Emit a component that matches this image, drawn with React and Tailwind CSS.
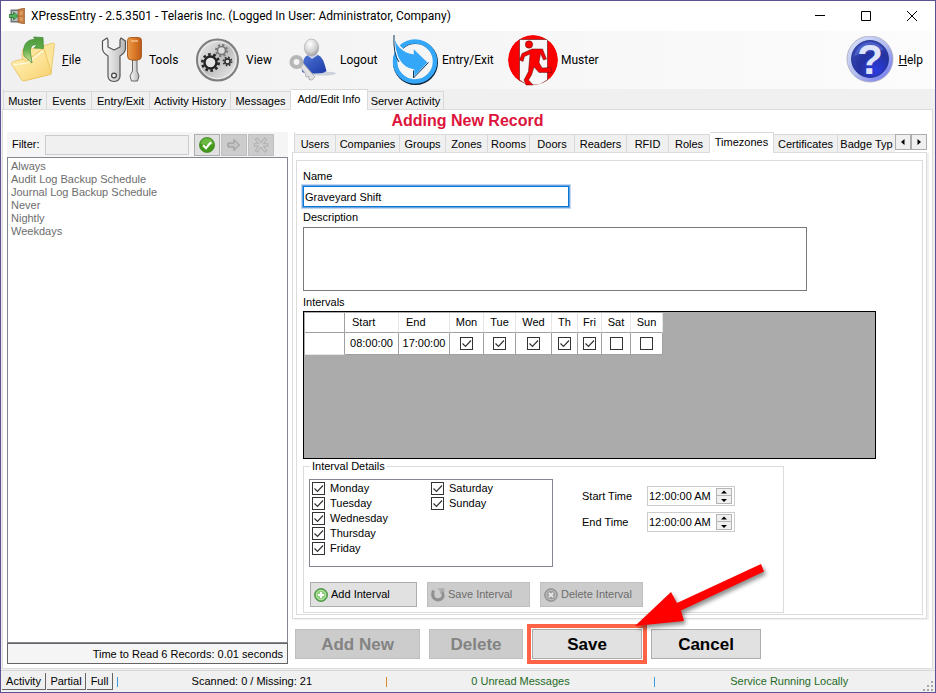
import { useState } from 'react';
import { clsx } from 'clsx';

const MAIN_TABS = [
  { label: 'Muster', width: 'w-[43px]' },
  { label: 'Events', width: 'w-[45px]' },
  { label: 'Entry/Exit', width: 'w-[58px]' },
  { label: 'Activity History', width: 'w-[81px]' },
  { label: 'Messages', width: 'w-[60px]' },
  { label: 'Add/Edit Info', width: 'w-[77px]' },
  { label: 'Server Activity', width: 'w-[76px]' },
];

const RECORD_TABS = [
  { label: 'Users', width: 'w-[41px]' },
  { label: 'Companies', width: 'w-[64px]' },
  { label: 'Groups', width: 'w-[46px]' },
  { label: 'Zones', width: 'w-[42px]' },
  { label: 'Rooms', width: 'w-[42px]' },
  { label: 'Doors', width: 'w-[45px]' },
  { label: 'Readers', width: 'w-[52px]' },
  { label: 'RFID', width: 'w-[42px]' },
  { label: 'Roles', width: 'w-[41px]' },
  { label: 'Timezones', width: 'w-[64px]' },
  { label: 'Certificates', width: 'w-[64px]' },
  { label: 'Badge Typ', width: 'w-[58px]' },
];

const RECORDS = [
  'Always',
  'Audit Log Backup Schedule',
  'Journal Log Backup Schedule',
  'Never',
  'Nightly',
  'Weekdays',
];

const GRID_DAYS = [
  { label: 'Mon', width: 'w-[34px]', on: true },
  { label: 'Tue', width: 'w-[32px]', on: true },
  { label: 'Wed', width: 'w-[36px]', on: true },
  { label: 'Th', width: 'w-[26px]', on: true },
  { label: 'Fri', width: 'w-[24px]', on: true },
  { label: 'Sat', width: 'w-[29px]', on: false },
  { label: 'Sun', width: 'w-[32px]', on: false },
];

const WEEK = ['Monday', 'Tuesday', 'Wednesday', 'Thursday', 'Friday', 'Saturday', 'Sunday'];

/* ---------- icons ---------- */

function AppIcon() {
  return (
    <svg viewBox="0 0 16 16" className="size-4" aria-hidden="true">
      <path d="M1.500 1.500h8v13h-8z" fill="#6f7478" />
      <path d="M3 3h6v10H3z" fill="#b9c0c2" />
      <path d="M9 1.500L15.500 0v16L9 14.500z" fill="#c07a3e" stroke="#8a5224" strokeWidth=".6" />
      <path d="M10.500 3.500l3.500-1v4.600l-3.500.5zM10.500 9l3.500.3v4.400l-3.500-1z" fill="#d9985c" />
      <path d="M0 6.500h4.500V4L9 8l-4.500 4V9.500H0z" fill="#54b35a" stroke="#1f6b2b" strokeWidth=".7" />
    </svg>
  );
}

function FileIcon() {
  return (
    <svg viewBox="0 0 48 48" className="size-12" aria-hidden="true">
      <defs>
        <linearGradient id="folder" x1="0" y1="0" x2="1" y2="1">
          <stop offset="0" stopColor="#fff2bd" />
          <stop offset=".55" stopColor="#fce293" />
          <stop offset="1" stopColor="#f7cf6e" />
        </linearGradient>
        <linearGradient id="leaf" x1="0" y1="0" x2="0" y2="1">
          <stop offset="0" stopColor="#4f9a3c" />
          <stop offset=".5" stopColor="#5fae4b" />
          <stop offset="1" stopColor="#a5d788" stopOpacity=".5" />
        </linearGradient>
      </defs>
      <path d="M12 19l1-6 7-2 3 2 20-6q1.500 0 1.500 1.500L41 38 16 44z" fill="#fbe59a" stroke="#e8c25c" strokeWidth=".8" />
      <path d="M1.500 28q0-2 2-2.500l9-2.500 4 2.500 15-12q2-1 3 .5L41 36q.5 2-1 2.500L14 45q-2 .3-3-2z" fill="url(#folder)" stroke="#e9bf58" strokeWidth=".8" />
      <path d="M3 29L17 27 33 15" stroke="#fffbe6" strokeWidth="1.200" fill="none" />
      <path d="M14 20C12 9 17 3 25 3.500L23.500 1 33 1.500l.5 11L24 12l3-3c-6-1-7 3-6.500 8l1.500 10z" fill="url(#leaf)" stroke="#3f8a35" strokeWidth=".7" />
    </svg>
  );
}

function ToolsIcon() {
  return (
    <svg viewBox="0 0 48 48" className="size-12" aria-hidden="true">
      <defs>
        <linearGradient id="steel" x1="0" x2="1">
          <stop offset="0" stopColor="#fdfdfd" />
          <stop offset="1" stopColor="#b5b5b5" />
        </linearGradient>
        <linearGradient id="handle" x1="0" x2="1">
          <stop offset="0" stopColor="#e99a4c" />
          <stop offset=".5" stopColor="#dc7a28" />
          <stop offset="1" stopColor="#b9591a" />
        </linearGradient>
      </defs>
      <path
        d="M10 2L5.500 5v8q.5 4 5.500 7V40q0 5 6 5.500 6-.5 6-5.500V20q5-3 5.500-7V5L24 2l-1 2v7l-6 3-6-3V4z"
        fill="url(#steel)"
        stroke="#555"
        strokeWidth="1.200"
        strokeLinejoin="round"
      />
      <circle cx="17" cy="39.500" r="2.400" fill="#eee" stroke="#444" strokeWidth="1.200" />
      <path d="M35.500 24h4.500v11l2 5-1.500 5h-6L33 40l2.500-5z" fill="url(#steel)" stroke="#666" strokeWidth="1" />
      <path d="M33.500 1.500h8q3 0 3 3V20q0 4-4 4h-6q-4 0-4-4V4.500q0-3 3-3z" fill="url(#handle)" stroke="#a5581d" strokeWidth=".9" />
      <path d="M34 5h7" stroke="#f6c08a" strokeWidth="1.500" />
    </svg>
  );
}

function ViewIcon() {
  return (
    <svg viewBox="0 0 48 48" className="size-12" aria-hidden="true">
      <defs>
        <linearGradient id="chrome" x1="0" y1="0" x2="1" y2="1">
          <stop offset="0" stopColor="#f4f4f4" />
          <stop offset=".5" stopColor="#bcbcbc" />
          <stop offset="1" stopColor="#f2f2f2" />
        </linearGradient>
      </defs>
      <circle cx="23.500" cy="24" r="20.500" fill="url(#chrome)" stroke="#7d7d7d" strokeWidth="2" />
      <circle cx="23.500" cy="24" r="18.500" fill="none" stroke="#eee" strokeWidth="1" />
      <g fill="none" stroke="#222">
        <circle cx="16.500" cy="26.500" r="6" strokeWidth="2.400" fill="#e4e4e4" />
        <circle cx="16.500" cy="26.500" r="8.200" strokeWidth="2.600" strokeDasharray="2.575 2.575" />
      </g>
      <g fill="none" stroke="#777">
        <circle cx="27.500" cy="14.500" r="4" strokeWidth="1.600" fill="#ddd" />
        <circle cx="27.500" cy="14.500" r="5.600" strokeWidth="1.800" strokeDasharray="2.200 2.200" />
      </g>
      <g fill="none" stroke="#333">
        <circle cx="33.500" cy="25.500" r="2.600" strokeWidth="1.600" fill="#ddd" />
        <circle cx="33.500" cy="25.500" r="4.100" strokeWidth="1.700" strokeDasharray="1.610 1.610" />
      </g>
    </svg>
  );
}

function LogoutIcon() {
  return (
    <svg viewBox="0 0 48 48" className="size-12" aria-hidden="true">
      <defs>
        <radialGradient id="head" cx=".4" cy=".3" r=".8">
          <stop offset="0" stopColor="#ffffff" />
          <stop offset=".6" stopColor="#cfcfcf" />
          <stop offset="1" stopColor="#8d8d8d" />
        </radialGradient>
        <linearGradient id="shirt" x1="0" y1="0" x2="1" y2="1">
          <stop offset="0" stopColor="#4f74d4" />
          <stop offset="1" stopColor="#1a3aa8" />
        </linearGradient>
      </defs>
      <ellipse cx="34" cy="37.500" rx="14" ry="2" fill="#ccd1dc" />
      <path d="M14 36q0-15 6-17h10q5 1 8.500 16-2 2.500-12 2.500-9 0-12.500-1.500z" fill="url(#shirt)" />
      <path d="M19 19l5 4 6-4-2-2.500h-7z" fill="#c9d2ec" />
      <ellipse cx="23.500" cy="11.500" rx="7.200" ry="8.500" fill="url(#head)" stroke="#a5a5a5" strokeWidth=".6" />
      <path d="M11 30l4-3 12 14-3 3-3-.5v-3l-3 .5-.5-3.500z" fill="#e2e2e2" stroke="#a5a5a5" strokeWidth=".8" />
      <circle cx="8.500" cy="26" r="5" fill="#f4f4f4" stroke="#b6b6b6" strokeWidth="4" />
    </svg>
  );
}

function EntryExitIcon() {
  return (
    <svg viewBox="0 0 48 48" className="size-12 overflow-visible" aria-hidden="true">
      <circle cx="25.500" cy="26.500" r="20.500" fill="none" stroke="#0b2138" strokeWidth="4" />
      <circle cx="25" cy="25.500" r="20" fill="none" stroke="#35a7f8" strokeWidth="4.500" />
      <path
        d="M4-1Q8 15 23 17.500V11.500L38.500 26.500 23.500 42V34Q4 31 4-1z"
        fill="#35a7f8"
        stroke="#f5f5f5"
        strokeWidth="1.500"
      />
      <path d="M4-1Q3 18 9 26M23.500 34.500V42L38.500 26.500" fill="none" stroke="#12395e" strokeWidth="1" />
    </svg>
  );
}

function MusterIcon() {
  return (
    <svg viewBox="0 0 48 48" className="size-12 overflow-visible" aria-hidden="true">
      <defs>
        <clipPath id="disc">
          <circle cx="24" cy="24" r="25" />
        </clipPath>
      </defs>
      <g clipPath="url(#disc)">
        <circle cx="24" cy="24" r="25" fill="#fa0000" />
        <path d="M10.500 3.500h28V44L30 49H18l-7.500-5z" fill="#f7f7f7" stroke="#5a1010" strokeWidth=".6" />
      </g>
      <circle cx="20" cy="8.500" r="3.700" fill="#fa0000" stroke="#5a1010" strokeWidth=".5" />
      <path
        d="M23 13H33.500L37.500 23 34.500 24 31.500 17.500 30 26.500 33 32 42 31.500 43 36.500H30L25 31 22.500 39 19.500 44 24 49H17L15 44 19.500 35.500 21 18 15.500 20.500 14 25.500 10.500 24 13 17.500z"
        fill="#fa0000"
        stroke="#5a1010"
        strokeWidth=".5"
      />
    </svg>
  );
}

function HelpIcon() {
  return (
    <svg viewBox="0 0 48 48" className="size-12" aria-hidden="true">
      <defs>
        <linearGradient id="helpRim" x1="0" y1="0" x2="1" y2="1">
          <stop offset="0" stopColor="#dfe6fb" />
          <stop offset=".5" stopColor="#b3bdf0" />
          <stop offset="1" stopColor="#6670f0" />
        </linearGradient>
        <radialGradient id="helpFace" cx=".65" cy=".8" r=".9">
          <stop offset="0" stopColor="#2b3ce0" />
          <stop offset=".5" stopColor="#2532a0" />
          <stop offset="1" stopColor="#3c4fb8" />
        </radialGradient>
      </defs>
      <circle cx="24" cy="23" r="23" fill="url(#helpRim)" stroke="#a9a9b8" strokeWidth=".8" />
      <circle cx="24" cy="23" r="18.500" fill="url(#helpFace)" stroke="#1d2a86" strokeWidth=".8" />
      <path d="M8 20Q12 7 24 6 34 7 38 14 22 14 8 20z" fill="#6f80e6" opacity=".45" />
      <text x="24" y="38" textAnchor="middle" fontSize="42" fontWeight="700" fontFamily="Liberation Sans, Arial, sans-serif" fill="#dfe4fb">
        ?
      </text>
    </svg>
  );
}

function CheckBadge() {
  return (
    <svg viewBox="0 0 16 16" className="size-4" aria-hidden="true">
      <circle cx="8" cy="8" r="7.600" fill="#43991b" stroke="#2f7a10" strokeWidth=".6" />
      <path d="M1.500 7Q3 1.200 8 1.200T14.500 7Q8 9 1.500 7z" fill="#7cc653" opacity=".7" />
      <path d="M4 8.200l3 3 5-6" fill="none" stroke="#fff" strokeWidth="2.200" />
    </svg>
  );
}

function ArrowGlyph() {
  return (
    <svg viewBox="0 0 14 14" className="size-3.5" aria-hidden="true">
      <path d="M1 5h6V1.500L12.500 7 7 12.500V9H1z" fill="#c4c4c4" stroke="#949494" strokeWidth="1" />
    </svg>
  );
}

function StarGlyph() {
  return (
    <svg viewBox="0 0 16 16" className="size-4" aria-hidden="true">
      <g strokeLinecap="square">
        <path d="M8 8L4 2.500M8 8l4-5.500M8 8h5.500M8 8H2.500M8 8l4 5.500M8 8l-4 5.500" stroke="#adadad" strokeWidth="3.400" />
        <path d="M8 8L4 2.500M8 8l4-5.500M8 8h5.500M8 8H2.500M8 8l4 5.500M8 8l-4 5.500" stroke="#cfcfcf" strokeWidth="1.600" />
      </g>
    </svg>
  );
}

function AddGlyph() {
  return (
    <svg viewBox="0 0 14 14" className="size-3.5" aria-hidden="true">
      <circle cx="7" cy="7" r="6.500" fill="#5cb04c" stroke="#3f8838" strokeWidth=".8" />
      <circle cx="7" cy="7" r="4.800" fill="#8fce7c" stroke="#d5efcc" strokeWidth=".8" />
      <path d="M7 4v6M4 7h6" stroke="#fff" strokeWidth="2" />
    </svg>
  );
}

function UndoGlyph() {
  return (
    <svg viewBox="0 0 14 14" className="size-3.5" aria-hidden="true">
      <path d="M2.500 2.500Q0 9 5 11.500 10 13 12 8.500 12.500 5 10 3" fill="none" stroke="#909090" strokeWidth="3" />
      <path d="M6.500.3h7V4L11 3.500V6z" fill="#adadad" />
    </svg>
  );
}

function DeleteGlyph() {
  return (
    <svg viewBox="0 0 14 14" className="size-3.5" aria-hidden="true">
      <circle cx="7" cy="7" r="6.300" fill="#9d9d9d" stroke="#838383" strokeWidth=".8" />
      <circle cx="7" cy="7" r="4.800" fill="none" stroke="#c9c9c9" strokeWidth=".8" />
      <path d="M4.800 4.800l4.400 4.400M9.200 4.800L4.800 9.200" stroke="#e6e6e6" strokeWidth="1.800" />
    </svg>
  );
}

function Triangle({ d }) {
  return (
    <svg viewBox="0 0 8 8" className="size-2 shrink-0" aria-hidden="true">
      <path d={d} fill="#000" />
    </svg>
  );
}

/* ---------- small controls ---------- */

function Tick({ id, label, checked, onChange }) {
  return (
    <span className="inline-grid size-[13px] shrink-0">
      <input
        id={id}
        type="checkbox"
        aria-label={label}
        checked={checked}
        onChange={onChange}
        className="peer col-start-1 row-start-1 size-[13px] appearance-none border border-[#333] bg-white"
      />
      <svg
        viewBox="0 0 13 13"
        className="pointer-events-none invisible col-start-1 row-start-1 size-[13px] peer-checked:visible"
        aria-hidden="true"
      >
        <path d="M2.500 6.500l3 3 5.500-6" fill="none" stroke="#333" strokeWidth="1.200" />
      </svg>
    </span>
  );
}

function ToolButton({ icon, width, children }) {
  return (
    <button type="button" className={clsx('flex items-center gap-1', width)}>
      {icon}
      <span>{children}</span>
    </button>
  );
}

function Tab({ label, width, selected, onClick }) {
  return (
    <button
      type="button"
      role="tab"
      aria-selected={selected}
      onClick={onClick}
      className={clsx(
        'shrink-0 border-t border-r border-[#d9d9d9] text-center whitespace-nowrap',
        width,
        selected ? 'h-[21px] bg-white pb-0.5' : 'mt-0.5 h-[18px] bg-[#f0f0f0] pt-0.5',
      )}
    >
      {label}
    </button>
  );
}

function IntervalButton({ icon, label, disabled, width }) {
  return (
    <button
      type="button"
      disabled={disabled}
      className={clsx(
        'flex h-[25px] items-center gap-[3px] border px-[3px]',
        width,
        disabled ? 'border-[#bfbfbf] bg-[#ccc] text-[#6d6d6d]' : 'border-[#adadad] bg-[#e1e1e1]',
      )}
    >
      {icon}
      {label}
    </button>
  );
}

function BigButton({ label, disabled, width }) {
  return (
    <button
      type="button"
      disabled={disabled}
      className={clsx(
        'h-[30px] border text-[17px] font-bold',
        width,
        disabled ? 'border-[#bfbfbf] bg-[#ccc] text-[#838383]' : 'border-[#adadad] bg-[#e1e1e1] text-black',
      )}
    >
      {label}
    </button>
  );
}

function TimeField({ id, label }) {
  const [value, setValue] = useState('12:00:00 AM');
  return (
    <div className="flex items-center">
      <label htmlFor={id} className="w-[65px]">{label}</label>
      <div className="flex h-5 w-[88px] items-center border border-[#ccc] bg-white pr-0.5">
        <input
          id={id}
          value={value}
          onChange={(e) => setValue(e.target.value)}
          className="h-4 min-w-0 flex-1 pl-px outline-none"
        />
        <div className="flex w-4 flex-col border border-[#b5b5b5] bg-[#f0f0f0]">
          <button type="button" aria-label={`${label} up`} className="flex h-[7px] items-center justify-center border-b border-[#b5b5b5]">
            <Triangle d="M1 5.500l3-3 3 3z" />
          </button>
          <button type="button" aria-label={`${label} down`} className="flex h-[7px] items-center justify-center">
            <Triangle d="M1 3l3 3 3-3z" />
          </button>
        </div>
      </div>
    </div>
  );
}

/* ---------- regions ---------- */

function TitleBar() {
  return (
    <header className="flex h-[30px] items-center bg-white pl-2 font-[Roboto,'Noto_Sans',sans-serif] text-[12px]">
      <AppIcon />
      <h1 className="flex-1 pl-1.5">XPressEntry - 2.5.3501 - Telaeris Inc. (Logged In User: Administrator, Company)</h1>
      <button type="button" aria-label="Minimize" className="flex h-full w-[46px] items-center justify-center">
        <svg viewBox="0 0 10 10" className="size-2.5"><path d="M0 4.500h10" stroke="#000" /></svg>
      </button>
      <button type="button" aria-label="Maximize" className="flex h-full w-[46px] items-center justify-center">
        <svg viewBox="0 0 10 10" className="size-2.5"><path d="M.5.5h9v9h-9z" fill="none" stroke="#000" /></svg>
      </button>
      <button type="button" aria-label="Close" className="flex h-full w-[46px] items-center justify-center">
        <svg viewBox="0 0 10 10" className="size-2.5"><path d="M0 0l10 10M10 0L0 10" stroke="#000" /></svg>
      </button>
    </header>
  );
}

function Toolbar() {
  return (
    <nav className="flex h-[58px] items-center bg-linear-to-r from-[#f0f0f0] to-[#fcfcfc] pr-3 pl-[9px] font-[Roboto,'Noto_Sans',sans-serif] text-[12px]">
      <ToolButton icon={<FileIcon />} width="w-[87px]"><u>F</u>ile</ToolButton>
      <ToolButton icon={<ToolsIcon />} width="w-[97px]">Tools</ToolButton>
      <ToolButton icon={<ViewIcon />} width="w-[94px]">View</ToolButton>
      <ToolButton icon={<LogoutIcon />} width="w-[102px]">Logout</ToolButton>
      <ToolButton icon={<EntryExitIcon />} width="w-[119px]">Entry/Exit</ToolButton>
      <ToolButton icon={<MusterIcon />}>Muster</ToolButton>
      <div className="flex-1" />
      <ToolButton icon={<HelpIcon />}><u>H</u>elp</ToolButton>
    </nav>
  );
}

function RecordList() {
  const small = 'flex h-[22px] w-[26px] items-center justify-center border';
  return (
    <aside className="flex w-[281px] shrink-0 flex-col pt-[22px] pb-1">
      <div className="flex h-[25px] items-center bg-[#f5f5f5] pr-3.5 pl-[5px]">
        <label htmlFor="filter" className="w-[33px]">Filter:</label>
        <input id="filter" className="h-5 min-w-0 flex-1 border border-[#ccc] bg-[#f0f0f0] px-1" />
        <div className="ml-[5px] flex gap-px">
          <button type="button" aria-label="Apply filter" className={clsx(small, 'border-[#adadad] bg-[#e1e1e1]')}>
            <CheckBadge />
          </button>
          <button type="button" aria-label="Next" disabled className={clsx(small, 'border-[#bfbfbf] bg-[#ccc]')}>
            <ArrowGlyph />
          </button>
          <button type="button" aria-label="Clear filter" disabled className={clsx(small, 'border-[#bfbfbf] bg-[#ccc]')}>
            <StarGlyph />
          </button>
        </div>
      </div>
      <ul className="flex-1 border border-[#828790] bg-white px-[3px] py-0.5 leading-[13px] text-[#6d6d6d]">
        {RECORDS.map((name) => (
          <li key={name}>{name}</li>
        ))}
      </ul>
      <div className="h-[21px] border border-[#646464] bg-[#f5f5f5] pr-1 text-right leading-5">
        Time to Read 6 Records: 0.01 seconds
      </div>
    </aside>
  );
}

function IntervalGrid() {
  const [days, setDays] = useState(GRID_DAYS.map((d) => d.on));
  const toggle = (i) => setDays(days.map((on, n) => (n === i ? !on : on)));
  const head = 'border-r border-b border-r-[#e5e5e5] border-b-[#a0a0a0] p-0 font-normal';
  const cell = 'border-r border-b border-[#a0a0a0] p-0';

  return (
    <div className="h-[148px] w-full max-w-[573px] border border-black bg-[#ababab] pt-px pl-px">
      <table className="w-[358px] table-fixed border-separate border-spacing-0 bg-white">
        <thead>
          <tr className="h-5">
            <th className="w-10 border-r border-b border-r-[#a0a0a0] border-b-[#a0a0a0]" aria-label="Row" />
            <th className={clsx(head, 'w-[54px] pl-[7px] text-left')}>Start</th>
            <th className={clsx(head, 'w-[51px] pl-[7px] text-left')}>End</th>
            {GRID_DAYS.map((d) => (
              <th key={d.label} className={clsx(head, d.width)}>{d.label}</th>
            ))}
          </tr>
        </thead>
        <tbody>
          <tr className="h-[22px]">
            <td className="border-r border-b border-r-[#a0a0a0] border-b-[#e5e5e5]" />
            <td className={clsx(cell, 'text-center')}>08:00:00</td>
            <td className={clsx(cell, 'text-center')}>17:00:00</td>
            {GRID_DAYS.map((d, i) => (
              <td key={d.label} className={clsx(cell, 'leading-none')}>
                <div className="flex items-center justify-center">
                  <Tick label={d.label} checked={days[i]} onChange={() => toggle(i)} />
                </div>
              </td>
            ))}
          </tr>
        </tbody>
      </table>
    </div>
  );
}

function IntervalDetails() {
  const [picked, setPicked] = useState(WEEK);
  const toggle = (day) =>
    setPicked(picked.includes(day) ? picked.filter((d) => d !== day) : [...picked, day]);

  return (
    <fieldset className="w-full max-w-[481px] border border-[#dcdcdc] px-[5px] pb-[5px]">
      <legend className="ml-px px-0.5 leading-[15px]">Interval Details</legend>
      <div className="mt-[5px] flex gap-[29px]">
        <div className="grid h-[88px] w-[244px] grid-flow-col grid-cols-2 grid-rows-[repeat(5,15px)] border border-[#828790] bg-white px-0.5 py-px">
          {WEEK.map((day) => (
            <div key={day} className="flex items-center gap-[5px]">
              <Tick id={`day-${day}`} checked={picked.includes(day)} onChange={() => toggle(day)} />
              <label htmlFor={`day-${day}`}>{day}</label>
            </div>
          ))}
        </div>
        <div className="flex flex-col gap-1.5 pt-[7px]">
          <TimeField id="start-time" label="Start Time" />
          <TimeField id="end-time" label="End Time" />
        </div>
      </div>
      <div className="mt-[15px] flex gap-2.5 pl-px">
        <IntervalButton icon={<AddGlyph />} label="Add Interval" width="w-[107px]" />
        <IntervalButton icon={<UndoGlyph />} label="Save Interval" width="w-[103px]" disabled />
        <IntervalButton icon={<DeleteGlyph />} label="Delete Interval" width="w-[103px]" disabled />
      </div>
    </fieldset>
  );
}

function PointerArrow() {
  return (
    <svg
      viewBox="0 0 136 68"
      className="pointer-events-none absolute right-[-127px] bottom-[30px] z-10 h-[68px] w-[136px] overflow-visible drop-shadow-[2px_3px_2px_rgba(0,0,0,0.45)]"
      aria-hidden="true"
    >
      <path d="M1 64L37 30l6 11L127 2l3 7.500L47 48.500 50 59z" fill="#fe0000" />
    </svg>
  );
}

function TimezoneForm() {
  const [name, setName] = useState('Graveyard Shift');
  return (
    <div className="flex flex-1 flex-col border border-[#dcdcdc] bg-white px-[3px] pt-[7px] pb-[3px] shadow-[2px_1px_0_#f0f0f0]">
      <div className="flex flex-1 flex-col items-start border border-[#dcdcdc] pt-2 pr-2 pl-[6px]">
        <label htmlFor="name" className="leading-[15px]">Name</label>
        <input
          id="name"
          value={name}
          onChange={(e) => setName(e.target.value)}
          className="mt-0.5 h-[21px] w-[266px] border border-[#0078d7] bg-white px-px shadow-[0_0_0_1px_#6da4e0,0_0_0_2px_#c3d7f2] outline-none"
        />
        <label htmlFor="description" className="mt-[3px] leading-[15px]">Description</label>
        <textarea id="description" className="mt-0.5 h-16 w-full max-w-[504px] resize-none border border-[#7a7a7a] bg-white" />
        <h3 className="mt-1 mb-px leading-[15px]">Intervals</h3>
        <IntervalGrid />
        <IntervalDetails />
      </div>
    </div>
  );
}

function RecordEditor() {
  const [tab, setTab] = useState('Timezones');
  return (
    <main className="flex min-w-0 flex-1 flex-col pr-[5px] pb-1">
      <div className="z-10 mt-[22px] -mb-px flex h-[21px] items-start pl-0.5">
        <div role="tablist" className="flex min-w-0 flex-1 items-start overflow-hidden border-l border-[#d9d9d9]">
          {RECORD_TABS.map((t) => (
            <Tab key={t.label} {...t} selected={t.label === tab} onClick={() => setTab(t.label)} />
          ))}
        </div>
        <div className="flex self-start pt-0.5">
          <button type="button" aria-label="Scroll tabs left" className="flex size-4 items-center justify-center border border-[#adadad] bg-[#f0f0f0]">
            <Triangle d="M5.500 1L2 4l3.500 3z" />
          </button>
          <button type="button" aria-label="Scroll tabs right" className="flex size-4 items-center justify-center border border-[#adadad] bg-[#f0f0f0]">
            <Triangle d="M2.500 1L6 4 2.500 7z" />
          </button>
        </div>
      </div>
      <TimezoneForm />
      <div className="flex items-center gap-[9px] pt-[5px] pl-[3px]">
        <BigButton label="Add New" width="w-[125px]" disabled />
        <div className="flex items-center gap-1">
          <BigButton label="Delete" width="w-[94px]" disabled />
          <div className="relative flex border-4 border-[#ff6347] p-px">
            <BigButton label="Save" width="w-[110px]" />
            <PointerArrow />
          </div>
          <BigButton label="Cancel" width="w-[110px]" />
        </div>
      </div>
    </main>
  );
}

function StatusBar() {
  const mode = 'h-[17px] border-r border-b border-[#646464] text-center leading-4';
  return (
    <footer className="mt-px flex h-[22px] items-center border-t border-[#d7d7d7] bg-[#f0f0f0] pl-px">
      <div className="flex gap-px">
        <button type="button" className={clsx(mode, 'w-11')}>Activity</button>
        <button type="button" className={clsx(mode, 'w-[39px]')}>Partial</button>
        <button type="button" className={clsx(mode, 'w-[26px]')}>Full</button>
      </div>
      <div className="ml-1 flex flex-1 items-center">
        <span className="h-2.5 w-px bg-[#3d9be0]" />
        <p className="flex-1 text-center">Scanned: 0 / Missing: 21</p>
        <span className="h-2.5 w-px bg-[#d98a2b]" />
        <p className="flex-1 text-center text-[#1e6b1e]">0 Unread Messages</p>
        <span className="h-2.5 w-px bg-[#3d9be0]" />
        <p className="flex-1 text-center text-[#1e6b1e]">Service Running Locally</p>
      </div>
      <svg viewBox="0 0 11 11" className="mr-px size-[11px] self-end" aria-hidden="true">
        <path d="M8 0h2v2H8zM4 4h2v2H4zM8 4h2v2H8zM0 8h2v2H0zM4 8h2v2H4zM8 8h2v2H8z" fill="#a8a8a8" />
      </svg>
    </footer>
  );
}

export default function App() {
  const [tab, setTab] = useState('Add/Edit Info');
  return (
    <div className="flex min-h-screen flex-col border border-[#5f5191] bg-[#f0f0f0] font-['Liberation_Sans',Arial,sans-serif] text-[11px] leading-[15px] text-black">
      <TitleBar />
      <Toolbar />
      <div role="tablist" className="z-10 -mb-px flex h-[21px] items-start pl-0.5">
        <div className="flex items-start border-l border-[#d9d9d9]">
          {MAIN_TABS.map((t) => (
            <Tab key={t.label} {...t} selected={t.label === tab} onClick={() => setTab(t.label)} />
          ))}
        </div>
      </div>
      <div className="mr-0.5 ml-px flex flex-1 flex-col border border-[#dcdcdc] bg-white">
        <div className="relative flex flex-1 gap-1 pl-1">
          <h2 className="absolute inset-x-0 top-px text-center text-[16px] leading-5 font-bold text-[#dc143c]">
            Adding New Record
          </h2>
          <RecordList />
          <RecordEditor />
        </div>
      </div>
      <StatusBar />
    </div>
  );
}
